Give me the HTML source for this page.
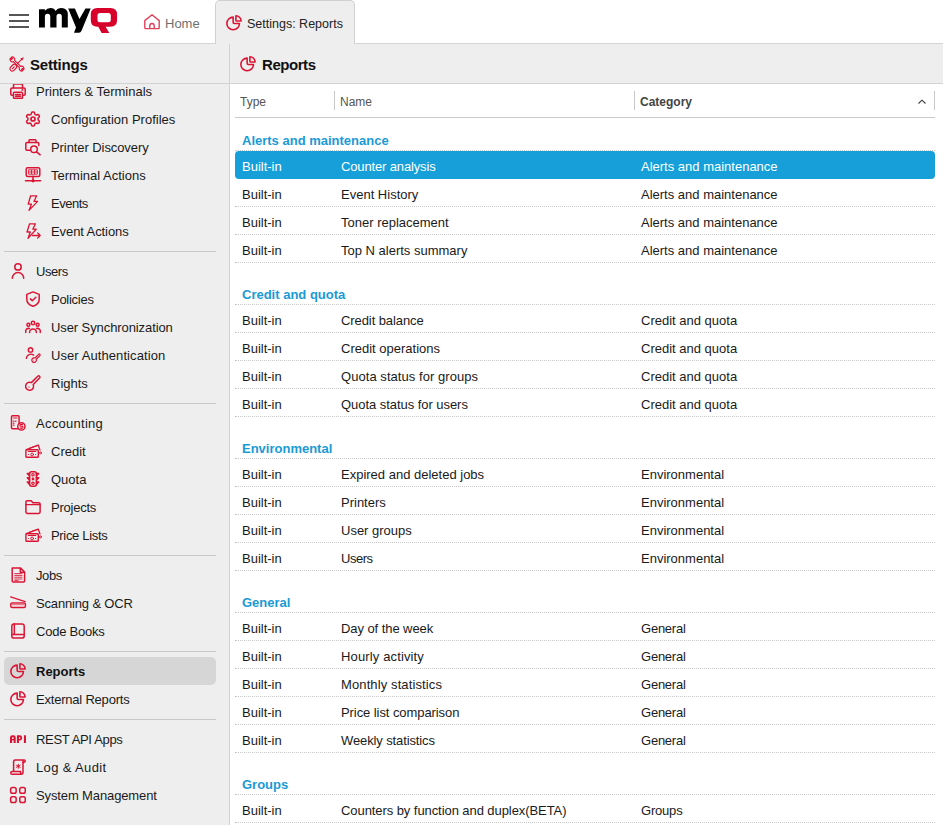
<!DOCTYPE html>
<html><head><meta charset="utf-8">
<style>
*{box-sizing:border-box;margin:0;padding:0}
html,body{width:943px;height:825px;overflow:hidden;background:#fff;font-family:"Liberation Sans",sans-serif;color:#1a1a1a}
.abs{position:absolute}
svg{position:absolute;display:block;overflow:visible}
.ic{fill:none;stroke:#dc1434;stroke-width:1.5;stroke-linecap:round;stroke-linejoin:round}
#top{position:absolute;left:0;top:0;width:943px;height:44px;background:#fff;border-bottom:1px solid #d4d4d4}
#tab{position:absolute;left:215px;top:0;width:140px;height:45px;background:#eeeeee;border:1px solid #d0d0d0;border-bottom:none;border-radius:5px 5px 0 0}
#side{position:absolute;left:0;top:44px;width:230px;height:781px;background:#eeeeee;border-right:1px solid #d2d2d2;overflow:hidden}
#sidehdr{position:absolute;left:0;top:0;width:229px;height:40px;background:#eeeeee;border-bottom:1px solid #d2d2d2;z-index:2}
#main{position:absolute;left:230px;top:44px;width:713px;height:781px;background:#fff}
#mainhdr{position:absolute;left:0;top:0;width:713px;height:40px;background:#eeeeee;border-bottom:1px solid #d2d2d2}
.t{position:absolute;white-space:nowrap;font-size:13px;line-height:16px}
.sep{position:absolute;left:4px;width:212px;height:1px;background:#c8c8c8}
.hl{position:absolute;left:4px;width:212px;height:28px;background:#d6d6d6;border-radius:5px}
.row{position:absolute;left:235px;width:700px;height:28px;border-bottom:1px dotted #c8c8c8}
.grp{position:absolute;left:235px;width:700px;border-bottom:1px dotted #c8c8c8}
.gt{position:absolute;left:7px;bottom:1.5px;font-weight:bold;font-size:13px;color:#1a9ad6;white-space:nowrap;line-height:16px}
.c1,.c2,.c3{position:absolute;top:8px;font-size:13px;line-height:16px;white-space:nowrap;color:#1a1a1a}
.c1{left:7px}.c2{left:106px}.c3{left:406px}
.sel{background:#169fd9;border-radius:4px;border-bottom-color:#169fd9}
.sel .c1,.sel .c2,.sel .c3{color:#fff}
</style></head><body>

<div id="top">
  <!-- hamburger -->
  <div class="abs" style="left:9px;top:14px;width:20px;height:2px;background:#555"></div>
  <div class="abs" style="left:9px;top:20px;width:20px;height:2px;background:#555"></div>
  <div class="abs" style="left:9px;top:26px;width:20px;height:2px;background:#555"></div>
  <!-- logo -->
  <svg style="left:39px;top:8px" width="80" height="26" viewBox="0 0 80 26">
    <path fill="#000" d="M0 1.2H5.9V2.8Q8 0 11.5 0Q15.3 0 16.6 2.9Q18.6 0 22.4 0Q28.8 0 28.8 6.5V19.45H22.8V8.3Q22.8 5.8 20.1 5.8Q17.5 5.8 17.5 8.5V19.45H11.25V8.3Q11.25 5.8 8.6 5.8Q5.9 5.8 5.9 8.5V19.45H0Z"/>
    <path fill="#000" d="M29.2 0.4H35.9L40.45 11.1L46.45 0.4H51.7L42.5 22.8Q41.6 24.7 40 24.7H35L37 19.45Z"/>
    <path fill="#d6002a" fill-rule="evenodd" d="M58.3 0H71.5Q78.06 0 78.06 6.5V12.2Q78.06 18.7 71.5 18.7H66.6L70.3 25H62.6L59.3 18.7H58.3Q51.8 18.7 51.8 12.2V6.5Q51.8 0 58.3 0ZM61 4.9Q58.5 4.9 58.5 7.4V11.8Q58.5 14.3 61 14.3H69.3Q71.8 14.3 71.8 11.8V7.4Q71.8 4.9 69.3 4.9Z"/>
  </svg>
  <!-- home -->
  <svg style="left:144px;top:14px" width="16" height="16" viewBox="0 0 16 16">
    <path class="ic" style="stroke:#e2415c;stroke-width:1.4" d="M0.8 6.6L8 0.8L15.2 6.6V13.8Q15.2 14.6 14.4 14.6H1.6Q0.8 14.6 0.8 13.8Z M5.8 14.6V11.7A2.2 2.2 0 0 1 10.2 11.7V14.6"/>
  </svg>
  <div class="t" style="left:165px;top:16px;color:#707070">Home</div>
</div>
<div id="tab">
  <svg style="left:10px;top:14px" width="16" height="16" viewBox="0 0 16 16">
    <path class="ic" style="stroke-width:1.6" d="M7.15 2.15A6.3 6.3 0 1 0 13.45 8.45H8.3Q7.15 8.45 7.15 7.3Z"/><path class="ic" style="stroke-width:1.6" d="M9.9 0.8V5.2Q9.9 5.95 10.65 5.95H15.1A5.2 5.2 0 0 0 9.9 0.8Z"/>
  </svg>
  <div class="t" style="left:31px;top:15px;color:#222;font-size:12.5px">Settings: Reports</div>
</div>

<div id="side">
  <div id="sidehdr">
    <svg style="left:10px;top:13px" width="14" height="14" viewBox="0 0 14 14">
      <g class="ic" style="stroke-width:1.15">
      <path d="M3.33 4.61L9.39 10.67A2.4 2.4 0 0 0 12.73 13.72L11.53 12.52L12.52 11.53L13.72 12.73A2.4 2.4 0 0 0 10.67 9.39L4.61 3.33A2.4 2.4 0 0 0 1.27 0.28L2.47 1.48L1.48 2.47L0.28 1.27A2.4 2.4 0 0 0 3.33 4.61Z"/>
      <path d="M11.6 2.4L7.6 6.4"/>
      <rect x="1" y="6.9" width="4.6" height="7.6" rx="2.3" transform="rotate(45 3.3 10.7)"/>
      <path d="M4.2 9.8L2.4 11.6"/>
      </g>
      <path d="M13.8 0.2L10.4 1.6L12.4 3.6Z" fill="#dc1434"/>
    </svg>
    <div class="t" style="left:30px;top:12px;font-size:15px;font-weight:bold;line-height:18px;color:#111;letter-spacing:-0.2px">Settings</div>
  </div>
  <div id="sitems" class="abs" style="left:0;top:0;width:229px">
<svg style="left:10px;top:39px" width="16" height="16" viewBox="0 0 16 16"><path class="ic" d="M3.2 12.3H2Q0.8 12.3 0.8 11.1V6.2Q0.8 4.9 2.1 4.9H13.9Q15.2 4.9 15.2 6.2V11.1Q15.2 12.3 14 12.3H12.8"/><path class="ic" d="M3.5 4.9V1.9Q3.5 1 4.4 1H11.6Q12.5 1 12.5 1.9V4.9"/><rect class="ic" x="3.5" y="9.3" width="9" height="6" rx="0.8"/><path class="ic" d="M5.6 11.6H10.4M5.6 13.3H10.4M12 6.9H12.9"/></svg>
<div class="t" style="left:36px;top:40px;">Printers &amp; Terminals</div>
<svg style="left:25px;top:67px" width="16" height="16" viewBox="0 0 16 16"><path class="ic" d="M8.00 0.95 L8.49 0.99 L8.96 1.14 L9.37 1.56 L9.61 2.37 L9.81 3.03 L10.08 3.34 L10.37 3.54 L10.68 3.71 L11.00 3.87 L11.40 3.94 L12.07 3.79 L12.89 3.59 L13.46 3.73 L13.83 4.07 L14.11 4.47 L14.32 4.92 L14.43 5.40 L14.26 5.97 L13.68 6.58 L13.21 7.08 L13.07 7.47 L13.05 7.82 L13.05 8.18 L13.07 8.53 L13.21 8.92 L13.68 9.42 L14.26 10.03 L14.43 10.60 L14.32 11.08 L14.11 11.52 L13.83 11.93 L13.46 12.27 L12.89 12.41 L12.07 12.21 L11.40 12.06 L11.00 12.13 L10.68 12.29 L10.37 12.46 L10.08 12.66 L9.81 12.97 L9.61 13.63 L9.37 14.44 L8.96 14.86 L8.49 15.01 L8.00 15.05 L7.51 15.01 L7.04 14.86 L6.63 14.44 L6.39 13.63 L6.19 12.97 L5.92 12.66 L5.63 12.46 L5.32 12.29 L5.00 12.13 L4.60 12.06 L3.93 12.21 L3.11 12.41 L2.54 12.27 L2.17 11.93 L1.89 11.53 L1.68 11.08 L1.57 10.60 L1.74 10.03 L2.32 9.42 L2.79 8.92 L2.93 8.53 L2.95 8.18 L2.95 7.82 L2.93 7.47 L2.79 7.08 L2.32 6.58 L1.74 5.97 L1.57 5.40 L1.68 4.92 L1.89 4.47 L2.17 4.07 L2.54 3.73 L3.11 3.59 L3.93 3.79 L4.60 3.94 L5.00 3.87 L5.32 3.71 L5.63 3.54 L5.92 3.34 L6.19 3.03 L6.39 2.37 L6.63 1.56 L7.04 1.14 L7.51 0.99Z"/><circle class="ic" style="stroke-width:1.7" cx="8" cy="8" r="2"/></svg>
<div class="t" style="left:51px;top:68px;">Configuration Profiles</div>
<svg style="left:25px;top:95px" width="16" height="16" viewBox="0 0 16 16"><path class="ic" d="M4 3.5V1.6Q4 0.8 4.8 0.8H10.2Q11 0.8 11 1.6V3.5"/><path class="ic" d="M4.8 11.2H2Q0.8 11.2 0.8 10V4.7Q0.8 3.5 2 3.5H12.6Q13.8 3.5 13.8 4.7V6.5"/><circle class="ic" cx="9" cy="10.3" r="3.3"/><path class="ic" d="M11.5 12.8L15.2 15.8"/></svg>
<div class="t" style="left:51px;top:96px;letter-spacing:-0.08px;">Printer Discovery</div>
<svg style="left:25px;top:123px" width="16" height="16" viewBox="0 0 16 16"><rect class="ic" x="1.2" y="0.8" width="13.6" height="8.6" rx="1.5"/><path class="ic" style="stroke-width:0.9;stroke-linecap:butt" d="M3.6 2.8H12.4V7.2H3.6ZM3.6 5H12.4M6.5 2.8V7.2M9.5 2.8V7.2"/><path class="ic" d="M8 9.2V13.8M0.5 13.8H15.5"/><circle cx="8" cy="13.8" r="1.6" fill="#dc1434"/></svg>
<div class="t" style="left:51px;top:124px;">Terminal Actions</div>
<svg style="left:25px;top:151px" width="16" height="16" viewBox="0 0 16 16"><path class="ic" style="stroke-width:1.3" d="M5.6 0.8H11.6L9 6.4H12.6L4 15.4L6.4 9.2H3.2Z"/></svg>
<div class="t" style="left:51px;top:152px;letter-spacing:-0.48px;">Events</div>
<svg style="left:25px;top:179px" width="16" height="16" viewBox="0 0 16 16"><path class="ic" style="stroke-width:1.3" d="M4.6 0.8H10.4L7.8 6.2H11.2L3 15.4L5.3 9H2Z"/><path class="ic" style="stroke-width:1.3" d="M7.5 12.5H15.2M12.6 9.9L15.2 12.5L12.6 15.1"/></svg>
<div class="t" style="left:51px;top:180px;letter-spacing:-0.09px;">Event Actions</div>
<div class="sep" style="top:207px"></div>
<svg style="left:10px;top:219px" width="16" height="16" viewBox="0 0 16 16"><circle class="ic" cx="8" cy="3.9" r="3.2"/><path class="ic" d="M2.3 15.3A5.7 5.7 0 0 1 13.7 15.3"/></svg>
<div class="t" style="left:36px;top:220px;letter-spacing:-0.43px;">Users</div>
<svg style="left:25px;top:247px" width="16" height="16" viewBox="0 0 16 16"><path class="ic" d="M8 0.9L14.2 3.4V8.2C14.2 11.6 11.8 14 8 15.2 4.2 14 1.8 11.6 1.8 8.2V3.4Z"/><path class="ic" d="M5.3 7.9L7.3 9.8L10.8 6.3"/></svg>
<div class="t" style="left:51px;top:248px;letter-spacing:-0.27px;">Policies</div>
<svg style="left:25px;top:275px" width="16" height="16" viewBox="0 0 16 16"><circle class="ic" cx="8" cy="4" r="1.7"/><circle class="ic" cx="3.4" cy="5.8" r="1.5"/><circle class="ic" cx="12.6" cy="5.8" r="1.5"/><path class="ic" d="M4.6 13.4A3.4 3.4 0 0 1 11.4 13.4M0.8 13.4A3 3 0 0 1 4.4 9.5M15.2 13.4A3 3 0 0 0 11.6 9.5"/></svg>
<div class="t" style="left:51px;top:276px;letter-spacing:-0.09px;">User Synchronization</div>
<svg style="left:25px;top:303px" width="16" height="16" viewBox="0 0 16 16"><circle class="ic" style="stroke-width:1.4" cx="5.5" cy="2.9" r="2.2"/><path class="ic" style="stroke-width:1.4" d="M1.3 11.3A4.6 4.6 0 0 1 8.6 8.1"/><path class="ic" style="stroke-width:1.2" d="M11.23 12.24L14.9 8.58A0.9 0.9 0 0 0 13.62 7.3L9.96 10.97A2.3 2.3 0 1 0 11.23 12.24Z"/><rect x="8" y="12.6" width="1" height="1" fill="#e6687c"/></svg>
<div class="t" style="left:51px;top:304px;letter-spacing:0.08px;">User Authentication</div>
<svg style="left:25px;top:331px" width="16" height="16" viewBox="0 0 16 16"><path class="ic" d="M8.19 9.45L14.57 3.07A1.3 1.3 0 0 0 12.73 1.23L6.35 7.61A4 4 0 1 0 8.19 9.45Z"/><rect x="3.4" y="11.4" width="1.4" height="1.4" fill="#e6687c"/></svg>
<div class="t" style="left:51px;top:332px;">Rights</div>
<div class="sep" style="top:359px"></div>
<svg style="left:10px;top:371px" width="16" height="16" viewBox="0 0 16 16"><rect class="ic" x="1.5" y="0.8" width="7.6" height="13" rx="1"/><path class="ic" style="stroke-width:1.2" d="M3.5 3H7.1M3.5 6.2H4M5.5 6.2H6M3.5 8.2H4M3.5 10.2H4"/><circle class="ic" cx="11.4" cy="11.4" r="3.6" style="fill:#eeeeee"/><path class="ic" style="stroke-width:1.1" d="M12.6 9.6H10.6Q9.9 9.6 9.9 10.5Q9.9 11.3 11 11.3H11.8Q12.9 11.3 12.9 12.2Q12.9 13.1 12.1 13.1H10.1"/></svg>
<div class="t" style="left:36px;top:372px;letter-spacing:0.28px;">Accounting</div>
<svg style="left:25px;top:399px" width="16" height="16" viewBox="0 0 16 16"><path class="ic" style="stroke-width:1.3" d="M1.3 6.6L13.3 2.2L15 6.9"/><path class="ic" style="stroke-width:1" stroke-dasharray="1.2 1" d="M4.5 5.2L12.8 2.2"/><rect class="ic" style="stroke-width:1.4" x="0.9" y="6.8" width="12.4" height="7.5" rx="0.8"/><path class="ic" style="stroke-width:1.2" d="M3.4 8.5H10.8"/><circle class="ic" style="stroke-width:1" cx="7.1" cy="11.5" r="1.4"/><circle cx="3.6" cy="11.5" r="0.6" fill="#dc1434"/><circle cx="10.6" cy="11.5" r="0.6" fill="#dc1434"/><circle class="ic" style="stroke-width:1" cx="15.4" cy="9.9" r="1"/></svg>
<div class="t" style="left:51px;top:400px;">Credit</div>
<svg style="left:25px;top:427px" width="16" height="16" viewBox="0 0 16 16"><rect class="ic" x="4.6" y="0.8" width="6.8" height="14.4" rx="2"/><circle class="ic" style="stroke-width:1.2" cx="8" cy="3.7" r="1.2"/><circle cx="8" cy="8" r="1.4" fill="#dc1434"/><circle class="ic" style="stroke-width:1.2" cx="8" cy="12.3" r="1.2"/><path class="ic" d="M4.6 2.5H2.3L4.6 5M4.6 6.8H2.3L4.6 9.3M4.6 11H2.3L4.6 13.5M11.4 2.5H13.7L11.4 5M11.4 6.8H13.7L11.4 9.3M11.4 11H13.7L11.4 13.5"/></svg>
<div class="t" style="left:51px;top:428px;">Quota</div>
<svg style="left:25px;top:455px" width="16" height="16" viewBox="0 0 16 16"><path class="ic" d="M0.9 3.2Q0.9 1.8 2.3 1.8H6.2L7.9 3.7H13.7Q15.1 3.7 15.1 5.1V13Q15.1 14.4 13.7 14.4H2.3Q0.9 14.4 0.9 13Z"/><path class="ic" style="stroke-width:1.2" d="M1 5.7H15"/></svg>
<div class="t" style="left:51px;top:456px;letter-spacing:-0.23px;">Projects</div>
<svg style="left:25px;top:483px" width="16" height="16" viewBox="0 0 16 16"><path class="ic" style="stroke-width:1.3" d="M1.3 6.6L13.3 2.2L15 6.9"/><path class="ic" style="stroke-width:1" stroke-dasharray="1.2 1" d="M4.5 5.2L12.8 2.2"/><rect class="ic" style="stroke-width:1.4" x="0.9" y="6.8" width="12.4" height="7.5" rx="0.8"/><path class="ic" style="stroke-width:1.2" d="M3.4 8.5H10.8"/><circle class="ic" style="stroke-width:1" cx="7.1" cy="11.5" r="1.4"/><circle cx="3.6" cy="11.5" r="0.6" fill="#dc1434"/><circle cx="10.6" cy="11.5" r="0.6" fill="#dc1434"/><circle class="ic" style="stroke-width:1" cx="15.4" cy="9.9" r="1"/></svg>
<div class="t" style="left:51px;top:484px;letter-spacing:-0.33px;">Price Lists</div>
<div class="sep" style="top:511px"></div>
<svg style="left:10px;top:523px" width="16" height="16" viewBox="0 0 16 16"><path class="ic" d="M2.2 1H10.6L14.6 5V14.1Q14.6 15.1 13.6 15.1H3.2Q2.2 15.1 2.2 14.1Z M10.3 1V5.3H14.6"/><path class="ic" style="stroke-width:0.9;stroke-linecap:butt" d="M4.4 6.6H12.4M4.4 8.4H12.4M4.4 10.2H12.4M4.4 12H12.4M4.4 13.6H8.5"/></svg>
<div class="t" style="left:36px;top:524px;letter-spacing:-0.40px;">Jobs</div>
<svg style="left:10px;top:551.5px" width="16" height="16" viewBox="0 0 16 16"><path class="ic" style="stroke-width:1.2" d="M0.6 0.9L15.2 5.6"/><rect class="ic" x="0.8" y="6.9" width="14.6" height="4.6" rx="1.3"/><path class="ic" style="stroke-width:1.6;stroke:#e8788a;stroke-linecap:butt" d="M1.8 8.4H14.4"/></svg>
<div class="t" style="left:36px;top:552px;letter-spacing:-0.16px;">Scanning &amp; OCR</div>
<svg style="left:10px;top:579px" width="16" height="16" viewBox="0 0 16 16"><rect class="ic" x="1.8" y="0.9" width="12.4" height="14.2" rx="2.2"/><path class="ic" d="M4.3 0.9V11.5M1.8 11.5H14.2"/></svg>
<div class="t" style="left:36px;top:580px;letter-spacing:-0.22px;">Code Books</div>
<div class="sep" style="top:607px"></div>
<div class="hl" style="top:613px"></div>
<svg style="left:10px;top:619px" width="16" height="16" viewBox="0 0 16 16"><path class="ic" style="stroke-width:1.6" d="M7.15 2.15A6.3 6.3 0 1 0 13.45 8.45H8.3Q7.15 8.45 7.15 7.3Z"/><path class="ic" style="stroke-width:1.6" d="M9.9 0.8V5.2Q9.9 5.95 10.65 5.95H15.1A5.2 5.2 0 0 0 9.9 0.8Z"/></svg>
<div class="t" style="left:36px;top:620px;font-weight:bold;color:#111;">Reports</div>
<svg style="left:10px;top:647px" width="16" height="16" viewBox="0 0 16 16"><path class="ic" style="stroke-width:1.6" d="M7.15 2.15A6.3 6.3 0 1 0 13.45 8.45H8.3Q7.15 8.45 7.15 7.3Z"/><path class="ic" style="stroke-width:1.6" d="M9.9 0.8V5.2Q9.9 5.95 10.65 5.95H15.1A5.2 5.2 0 0 0 9.9 0.8Z"/></svg>
<div class="t" style="left:36px;top:648px;letter-spacing:-0.21px;">External Reports</div>
<div class="sep" style="top:675px"></div>
<svg style="left:10px;top:691px" width="16" height="16" viewBox="0 0 16 16"><path fill="#dc1434" fill-rule="evenodd" d="M0 8V2.6Q0 0.2 2.4 0.2H3.3Q5.7 0.2 5.7 2.6V8H3.6V5.2H2.1V8ZM2.1 2.3H3.6V4.1H2.1Z M6.9 8V0.2H9.8Q12.1 0.2 12.1 2.5V3.3Q12.1 5.6 9.8 5.6H9V8ZM9 2.3H10.2V4.1H9Z M13.9 0.2H16V8H13.9Z"/></svg>
<div class="t" style="left:36px;top:688px;letter-spacing:-0.33px;">REST API Apps</div>
<svg style="left:10px;top:715px" width="16" height="16" viewBox="0 0 16 16"><path class="ic" d="M3.6 12.6V2.6Q3.6 0.9 5.3 0.9H14.2Q15.2 0.9 15.2 2.1Q15.2 3.4 13.6 3.4H12.6M4.5 0.9M13 1.5V13.3Q13 15.2 11.2 15.2H2.1Q0.8 15.2 0.8 13.9Q0.8 12.6 2.1 12.6H10.6V14"/><path class="ic" style="stroke-width:1" d="M8.3 5.3L8.3 9.3M6.5 6.3L10.1 8.3M6.5 8.3L10.1 6.3"/></svg>
<div class="t" style="left:36px;top:716px;letter-spacing:0.36px;">Log &amp; Audit</div>
<svg style="left:10px;top:743px" width="16" height="16" viewBox="0 0 16 16"><g class="ic" style="stroke-width:1.5"><rect x="0.65" y="0.5" width="5.5" height="5.8" rx="1.8"/><rect x="9.75" y="0.5" width="5.5" height="5.8" rx="1.8"/><rect x="0.65" y="9.7" width="5.5" height="5.8" rx="1.8"/><rect x="9.75" y="9.7" width="5.5" height="5.8" rx="1.8"/></g></svg>
<div class="t" style="left:36px;top:744px;letter-spacing:-0.12px;">System Management</div>
  </div>
</div>

<div id="main">
  <div id="mainhdr">
    <svg style="left:10px;top:12px" width="16" height="16" viewBox="0 0 16 16">
      <path class="ic" style="stroke-width:1.6" d="M7.15 2.15A6.3 6.3 0 1 0 13.45 8.45H8.3Q7.15 8.45 7.15 7.3Z"/><path class="ic" style="stroke-width:1.6" d="M9.9 0.8V5.2Q9.9 5.95 10.65 5.95H15.1A5.2 5.2 0 0 0 9.9 0.8Z"/>
    </svg>
    <div class="t" style="left:32px;top:12px;font-size:15px;font-weight:bold;line-height:18px;color:#111;letter-spacing:-0.45px">Reports</div>
  </div>
</div>

<div id="table">
<div class="t" style="left:240px;top:94px;font-size:12px;color:#555">Type</div>
<div class="t" style="left:340px;top:94px;font-size:12px;color:#555">Name</div>
<div class="t" style="left:640px;top:94px;font-size:12px;font-weight:bold;color:#444">Category</div>
<div class="abs" style="left:334px;top:91px;width:1px;height:19px;background:#c8c8c8"></div>
<div class="abs" style="left:634px;top:91px;width:1px;height:19px;background:#c8c8c8"></div>
<div class="abs" style="left:934px;top:91px;width:1px;height:19px;background:#c8c8c8"></div>
<div class="abs" style="left:235px;top:117px;width:700px;height:1px;background:#c9c9c9"></div>
<svg style="left:917px;top:99px" width="10" height="6" viewBox="0 0 10 6"><path d="M1.5 4.5L5 1.2L8.5 4.5" fill="none" stroke="#3a3a3a" stroke-width="1.15"/></svg>
<div class="grp" style="top:118px;height:33px"><div class="gt">Alerts and maintenance</div></div>
<div class="row sel" style="top:151px"><div class="c1">Built-in</div><div class="c2" style="letter-spacing:-0.140px">Counter analysis</div><div class="c3">Alerts and maintenance</div></div>
<div class="row" style="top:179px"><div class="c1">Built-in</div><div class="c2">Event History</div><div class="c3">Alerts and maintenance</div></div>
<div class="row" style="top:207px"><div class="c1">Built-in</div><div class="c2">Toner replacement</div><div class="c3">Alerts and maintenance</div></div>
<div class="row" style="top:235px"><div class="c1">Built-in</div><div class="c2">Top N alerts summary</div><div class="c3">Alerts and maintenance</div></div>
<div class="grp" style="top:263px;height:42px"><div class="gt">Credit and quota</div></div>
<div class="row" style="top:305px"><div class="c1">Built-in</div><div class="c2" style="letter-spacing:-0.085px">Credit balance</div><div class="c3">Credit and quota</div></div>
<div class="row" style="top:333px"><div class="c1">Built-in</div><div class="c2">Credit operations</div><div class="c3">Credit and quota</div></div>
<div class="row" style="top:361px"><div class="c1">Built-in</div><div class="c2" style="letter-spacing:0.055px">Quota status for groups</div><div class="c3">Credit and quota</div></div>
<div class="row" style="top:389px"><div class="c1">Built-in</div><div class="c2" style="letter-spacing:-0.048px">Quota status for users</div><div class="c3">Credit and quota</div></div>
<div class="grp" style="top:417px;height:42px"><div class="gt">Environmental</div></div>
<div class="row" style="top:459px"><div class="c1">Built-in</div><div class="c2">Expired and deleted jobs</div><div class="c3">Environmental</div></div>
<div class="row" style="top:487px"><div class="c1">Built-in</div><div class="c2">Printers</div><div class="c3">Environmental</div></div>
<div class="row" style="top:515px"><div class="c1">Built-in</div><div class="c2">User groups</div><div class="c3">Environmental</div></div>
<div class="row" style="top:543px"><div class="c1">Built-in</div><div class="c2" style="letter-spacing:-0.475px">Users</div><div class="c3">Environmental</div></div>
<div class="grp" style="top:571px;height:42px"><div class="gt">General</div></div>
<div class="row" style="top:613px"><div class="c1">Built-in</div><div class="c2" style="letter-spacing:-0.071px">Day of the week</div><div class="c3" style="letter-spacing:-0.233px">General</div></div>
<div class="row" style="top:641px"><div class="c1">Built-in</div><div class="c2" style="letter-spacing:0.136px">Hourly activity</div><div class="c3" style="letter-spacing:-0.233px">General</div></div>
<div class="row" style="top:669px"><div class="c1">Built-in</div><div class="c2" style="letter-spacing:0.112px">Monthly statistics</div><div class="c3" style="letter-spacing:-0.233px">General</div></div>
<div class="row" style="top:697px"><div class="c1">Built-in</div><div class="c2" style="letter-spacing:-0.075px">Price list comparison</div><div class="c3" style="letter-spacing:-0.233px">General</div></div>
<div class="row" style="top:725px"><div class="c1">Built-in</div><div class="c2" style="letter-spacing:-0.119px">Weekly statistics</div><div class="c3" style="letter-spacing:-0.233px">General</div></div>
<div class="grp" style="top:753px;height:42px"><div class="gt">Groups</div></div>
<div class="row" style="top:795px"><div class="c1">Built-in</div><div class="c2" style="letter-spacing:-0.072px">Counters by function and duplex(BETA)</div><div class="c3" style="letter-spacing:-0.200px">Groups</div></div>
</div>

</body></html>
